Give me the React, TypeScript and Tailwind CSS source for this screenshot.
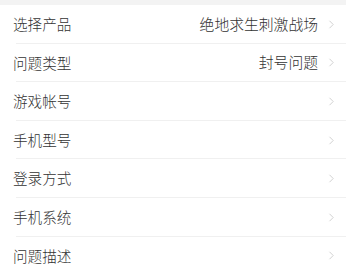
const rows: { label: string; value?: string }[] = [
  { label: "选择产品", value: "绝地求生刺激战场" },
  { label: "问题类型", value: "封号问题" },
  { label: "游戏帐号" },
  { label: "手机型号" },
  { label: "登录方式" },
  { label: "手机系统" },
  { label: "问题描述" },
];

function Chevron() {
  return (
    <svg width="7" height="11" viewBox="0 0 7 11" className="shrink-0">
      <path d="M1.5 1.8 L5.2 5.5 L1.5 9.2" fill="none" stroke="#d2d2d2" strokeWidth="1" />
    </svg>
  );
}

export default function App() {
  return (
    <div
      className="w-[346px] h-[269px] overflow-hidden bg-white"
      style={{ fontFamily: '"Noto Sans CJK SC", "Noto Sans", sans-serif' }}
    >
      <div className="h-[5px] bg-[#f3f3f3]" />
      {rows.map((row) => (
        <div key={row.label} className="relative h-[38.6px] flex items-center pl-[13px] pr-[11px]">
          <span className="text-[14.6px] font-light text-[#333] leading-none">{row.label}</span>
          <div className="ml-auto flex items-center gap-[10px]">
            {row.value && (
              <span className="text-[14.8px] font-light text-[#333] leading-none">{row.value}</span>
            )}
            <Chevron />
          </div>
          <div className="absolute left-[16px] right-0 bottom-0 h-px bg-[#f0f0f0]" />
        </div>
      ))}
    </div>
  );
}
